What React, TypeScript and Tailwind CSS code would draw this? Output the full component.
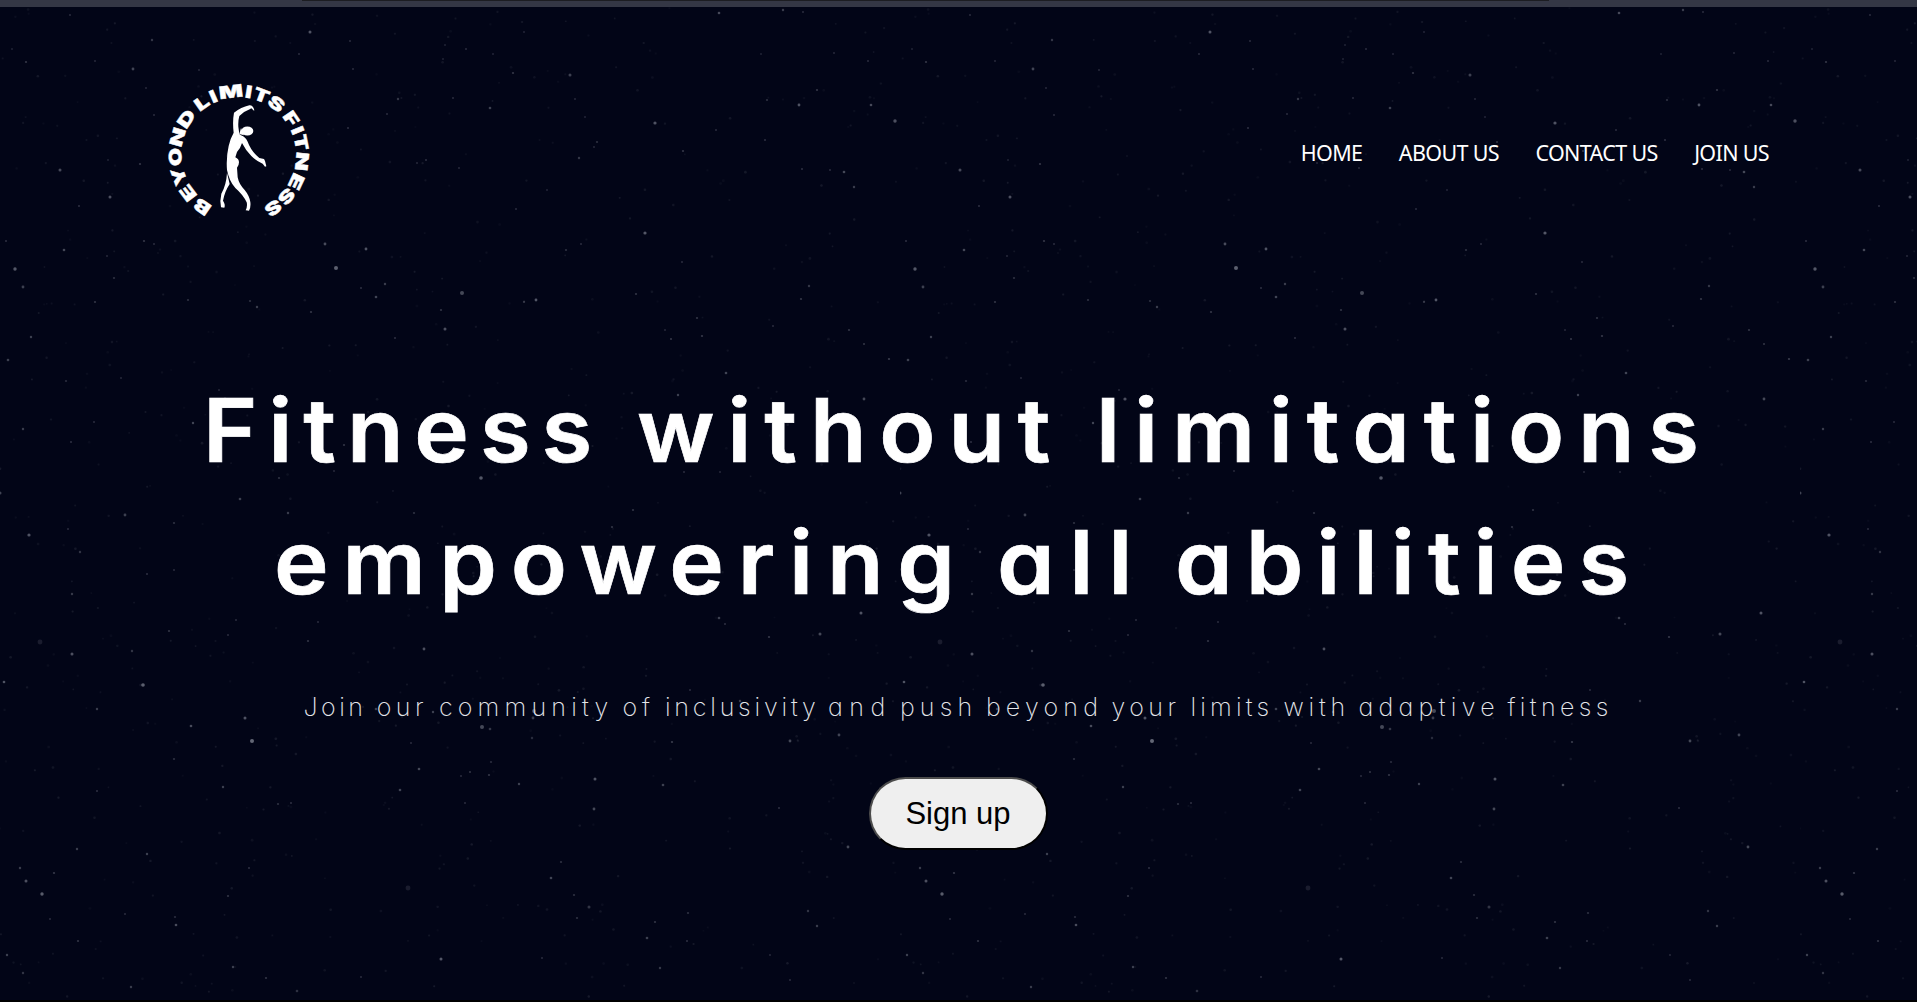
// Star list for one 900px wide tile: x, y, radius, opacity.
const STARS: [number, number, number, number][] = [
  [70, 15, 1, 0.2], [310, 32, 1.5, 0.4], [152, 40, 1.2, 0.25], [350, 41, 1, 0.2], [12, 49, 1, 0.15], [26, 62, 1.1, 0.25],
  [95, 61, 1, 0.18], [133, 69, 1.4, 0.32], [199, 70, 1, 0.18], [299, 54, 1, 0.2], [353, 69, 1, 0.2], [719, 13, 1.3, 0.35],
  [783, 10, 1.2, 0.28], [803, 12, 1, 0.2], [445, 45, 1, 0.15], [466, 49, 1, 0.2], [443, 59, 1, 0.15], [493, 54, 1, 0.16],
  [524, 32, 1, 0.16], [513, 73, 1.1, 0.25], [570, 75, 1.5, 0.3], [761, 54, 1, 0.15], [834, 53, 1, 0.18], [868, 61, 1, 0.2],
  [398, 99, 1.2, 0.25], [453, 98, 1, 0.2], [490, 108, 1.3, 0.3], [387, 114, 1, 0.2], [575, 99, 1, 0.18], [585, 117, 1, 0.16],
  [655, 123, 1.6, 0.4], [799, 105, 1.4, 0.4], [871, 105, 1.3, 0.35], [895, 121, 1.7, 0.38], [767, 100, 1.1, 0.22], [817, 90, 1.1, 0.25],
  [154, 115, 1, 0.2], [146, 88, 1, 0.18], [60, 170, 1.5, 0.35], [140, 164, 1.1, 0.25], [110, 197, 1.5, 0.38], [108, 160, 1, 0.15],
  [79, 206, 1, 0.22], [348, 128, 1, 0.22], [426, 160, 1, 0.22], [417, 163, 1, 0.18], [459, 168, 1, 0.18], [579, 158, 1.2, 0.25],
  [597, 142, 1.1, 0.22], [594, 147, 1, 0.18], [683, 151, 1.1, 0.25], [716, 130, 1, 0.2], [765, 140, 1, 0.22], [844, 172, 1.3, 0.34],
  [854, 187, 1.2, 0.28], [802, 169, 1, 0.22], [830, 170, 1, 0.2], [547, 190, 1, 0.16], [516, 209, 1, 0.2], [645, 233, 1.6, 0.42],
  [325, 244, 1.4, 0.36], [366, 249, 1.4, 0.4], [336, 268, 2, 0.46], [144, 241, 1.1, 0.25], [154, 244, 1, 0.2], [64, 250, 1.3, 0.34],
  [6, 241, 1, 0.22], [15, 269, 1.7, 0.42], [23, 287, 1.4, 0.3], [107, 256, 1, 0.18], [114, 278, 1.1, 0.22], [385, 284, 1.2, 0.28],
  [361, 288, 1, 0.22], [376, 297, 1.3, 0.32], [462, 293, 2, 0.34], [536, 300, 1.4, 0.42], [524, 302, 1.1, 0.25], [95, 302, 1.1, 0.24],
  [188, 300, 1.1, 0.22], [250, 301, 1.1, 0.22], [257, 307, 1.2, 0.28], [311, 312, 1.1, 0.25], [441, 310, 1.1, 0.24], [445, 329, 1.5, 0.38],
  [31, 337, 1.2, 0.3], [8, 360, 1.3, 0.3], [395, 338, 1, 0.22], [566, 250, 1.1, 0.22], [581, 244, 1, 0.2], [682, 262, 1, 0.2],
  [636, 294, 1.1, 0.24], [697, 318, 1.1, 0.24], [809, 286, 1.2, 0.25], [801, 299, 1.1, 0.25], [849, 330, 1.1, 0.24], [773, 326, 1, 0.2],
  [702, 336, 1.1, 0.26], [671, 339, 1, 0.26], [665, 330, 1, 0.18], [726, 373, 1.3, 0.32], [864, 344, 1, 0.25], [889, 359, 1.1, 0.28],
  [121, 378, 1, 0.18], [66, 381, 1.1, 0.2], [225, 399, 1.6, 0.38], [219, 390, 1, 0.18], [678, 395, 1.2, 0.3], [864, 399, 1.4, 0.34],
  [193, 423, 1.2, 0.32], [94, 422, 1, 0.2], [23, 429, 1.2, 0.28], [71, 442, 1, 0.22], [344, 445, 1.1, 0.24], [481, 478, 1.8, 0.42],
  [279, 478, 1.1, 0.22], [334, 471, 1, 0.18], [240, 499, 1.3, 0.3], [0, 493, 1.5, 0.32], [684, 472, 1, 0.2], [720, 472, 1, 0.18],
  [125, 515, 1.4, 0.3], [174, 523, 1.1, 0.22], [288, 513, 1.2, 0.28], [29, 535, 1.6, 0.4], [68, 529, 1, 0.2], [80, 552, 1.2, 0.24],
  [72, 594, 1.2, 0.26], [174, 570, 1, 0.2], [147, 574, 1, 0.22], [414, 513, 1.1, 0.22], [633, 510, 1.1, 0.24], [612, 527, 1.1, 0.24],
  [169, 631, 1.1, 0.24], [40, 642, 2.4, 0.12], [72, 654, 1.5, 0.38], [132, 651, 1.2, 0.24], [236, 620, 1, 0.2], [228, 635, 1, 0.2],
  [424, 649, 1.4, 0.38], [308, 641, 1.1, 0.24], [318, 622, 1, 0.2], [719, 618, 1.3, 0.3], [820, 634, 1.5, 0.34], [861, 613, 1.5, 0.4],
  [769, 637, 1.1, 0.26], [725, 624, 1, 0.22], [4, 682, 1.3, 0.4], [143, 685, 1.8, 0.46], [97, 709, 1.2, 0.28], [191, 726, 1.3, 0.36],
  [245, 718, 1.5, 0.4], [252, 741, 2, 0.5], [482, 727, 2, 0.34], [490, 729, 1.3, 0.25], [534, 711, 2, 0.34], [533, 718, 1.4, 0.28],
  [376, 709, 1.3, 0.3], [433, 712, 1.2, 0.3], [740, 701, 1.2, 0.28], [690, 690, 1, 0.2], [839, 735, 1.4, 0.32], [790, 741, 1.4, 0.34],
  [672, 742, 1.1, 0.28], [532, 738, 1.2, 0.2], [411, 743, 1, 0.2], [174, 759, 1.1, 0.22], [491, 762, 1.1, 0.2], [419, 769, 1.3, 0.34],
  [489, 775, 1.1, 0.25], [470, 772, 1, 0.25], [461, 776, 1, 0.2], [519, 784, 1.2, 0.3], [400, 790, 1.3, 0.32], [595, 779, 1.5, 0.4],
  [663, 785, 1.3, 0.3], [223, 787, 1.2, 0.3], [97, 791, 1, 0.22], [278, 804, 1.1, 0.22], [291, 803, 1, 0.22], [594, 809, 1.4, 0.34],
  [465, 803, 1, 0.2], [779, 808, 1, 0.22], [848, 847, 1.4, 0.34], [77, 849, 1.2, 0.28], [147, 854, 1.2, 0.3], [20, 868, 1.2, 0.28],
  [54, 873, 1.1, 0.26], [26, 881, 1.5, 0.38], [42, 894, 1.7, 0.44], [249, 868, 1, 0.22], [561, 862, 1.1, 0.22], [551, 878, 1.3, 0.32],
  [408, 888, 2.4, 0.12], [228, 896, 1.1, 0.24], [574, 895, 1.1, 0.22], [589, 907, 1.5, 0.24], [175, 917, 1.1, 0.2], [176, 925, 1.3, 0.36],
  [50, 919, 1, 0.2], [125, 914, 1, 0.2], [577, 918, 1.1, 0.22], [688, 913, 1.1, 0.22], [655, 922, 1.1, 0.24], [647, 938, 1.3, 0.3],
  [808, 911, 1.2, 0.24], [817, 926, 1.2, 0.28], [78, 941, 1.1, 0.24], [7, 955, 1.2, 0.3], [441, 959, 1.5, 0.42], [233, 967, 1.2, 0.3],
  [23, 973, 1.2, 0.24], [131, 987, 1.2, 0.28], [266, 978, 1.1, 0.24], [361, 977, 1, 0.2], [660, 968, 1.2, 0.26], [297, 991, 1.3, 0.22],
  [542, 958, 1, 0.2], [687, 941, 1, 0.22], [770, 955, 1, 0.18], [790, 980, 1, 0.2],
];

// Deterministic dust of very faint specks between the brighter stars.
function makeDust(count: number): [number, number, number, number][] {
  let seed = 7331;
  const next = () => {
    seed = (seed * 16807) % 2147483647;
    return seed / 2147483647;
  };
  return Array.from({ length: count }, () => [next() * 900, next() * 1000, 0.8 + next() * 0.5, 0.03 + next() * 0.07]);
}
const SKY = [...STARS, ...makeDust(600)];

function Starfield() {
  return (
    <svg className="absolute inset-0 h-full w-full" aria-hidden="true">
      <defs>
        <pattern id="sky" width="900" height="1002" patternUnits="userSpaceOnUse">
          {SKY.map(([x, y, r, o], i) => (
            <circle key={i} cx={x} cy={y} r={r} fill="#dfe3ee" opacity={o * 0.88} />
          ))}
        </pattern>
      </defs>
      <rect width="100%" height="100%" fill="url(#sky)" />
    </svg>
  );
}

// Ring letters: character, angle in degrees clockwise from the top, horizontal stretch.
const RING: [string, number, number][] = [
  ["B", -145, 1.4], ["E", -127, 1.5], ["Y", -110, 1.35], ["O", -92, 1.35], ["N", -74, 1.4], ["D", -55.5, 1.45],
  ["L", -35.5, 1.4], ["I", -23.5, 1.3], ["M", -7, 1.45], ["I", 9, 1.3], ["T", 21, 1.35], ["S", 36.5, 1.4],
  ["F", 55.5, 1.4], ["I", 67.5, 1.3], ["T", 79, 1.35], ["N", 96, 1.4], ["E", 115, 1.5], ["S", 131, 1.4], ["S", 147, 1.4],
];

function Logo() {
  return (
    <svg viewBox="0 0 540 480" className="h-[160px] w-[180px]" fill="#fff" role="img" aria-label="Beyond Limits Fitness">
      {RING.map(([ch, a, sx], i) => (
        <text
          key={i}
          transform={`translate(266 254) rotate(${a}) translate(0 -172) scale(${sx} 1)`}
          textAnchor="middle"
          fontFamily="Inter, sans-serif"
          fontWeight="900"
          fontSize="52"
          stroke="#fff"
          strokeWidth="1.2"
        >
          {ch}
        </text>
      ))}
      <path d="M312 122 L304 115 L299 118 Q280 125 268 138 Q264 152 265 170 L268 192 L273 196 Q287 201 293 215 Q303 243 328 264 L342 267 L345 273 L349 289 L345 290 L338 281 Q318 272 304 258 Q287 241 276 219 Q271 236 261 246 L256 262 Q267 267 267 277 Q267 286 261 293 L263 322 Q267 343 284 360 Q298 377 301 396 Q303 412 297 422 L287 421 Q293 409 290 397 Q279 374 256 354 Q238 335 231 300 Q228 262 236 228 Q241 205 251 188 Q247 155 252 128 Q273 112 298 106 Q309 105 313 121 Z" />
      <ellipse cx="292" cy="183" rx="18" ry="13.5" />
      <path d="M273 174 L268 192 L282 196 Z" />
      <path d="M231 308 Q229 345 214 371 Q209 391 213 412 L223 413 Q227 404 219 392 Q224 365 239 342 Z" />
    </svg>
  );
}

const NAV = ["HOME", "ABOUT US", "CONTACT US", "JOIN US"];

// Tagline words with their column width and tracking.
const TAGLINE: [string, string][] = [
  ["Join", "w-[73.2px] tracking-[3.5px]"],
  ["our", "w-[62.2px] tracking-[4.5px]"],
  ["community", "w-[183.5px] tracking-[5.2px]"],
  ["of", "w-[42.5px] tracking-[5px]"],
  ["inclusivity", "w-[163px] tracking-[3.8px]"],
  ["and", "w-[72px] tracking-[6.6px]"],
  ["push", "w-[86px] tracking-[5.2px]"],
  ["beyond", "w-[125.5px] tracking-[5.2px]"],
  ["your", "w-[79px] tracking-[4.5px]"],
  ["limits", "w-[93px] tracking-[4.2px]"],
  ["with", "w-[75px] tracking-[4.8px]"],
  ["adaptive", "w-[149px] tracking-[5.3px]"],
  ["fitness", "tracking-[4.4px]"],
];

export default function App() {
  return (
    <div className="relative flex h-[1002px] w-full flex-col overflow-hidden bg-[#020517] text-white">
      <Starfield />
      <div className="relative h-[7px] shrink-0 bg-[#343745]">
        <div className="ml-[302px] h-px w-[1247px] bg-[#1c1d22]" />
      </div>

      <header className="relative flex items-center justify-between pt-[63px] pr-[148px] pl-[150px]">
        <Logo />
        <nav className="mt-[6px] flex gap-[36.5px] font-['Noto_Sans',sans-serif] text-[21.5px] leading-7 tracking-[-0.65px]">
          {NAV.map((n) => (
            <a key={n} href="#" className="whitespace-nowrap">
              {n}
            </a>
          ))}
        </nav>
      </header>

      <main className="relative flex flex-col items-center font-['Inter',sans-serif] [font-feature-settings:'cv11']">
        <h1 className="mt-[134px] w-full whitespace-nowrap text-[88px] leading-[132px] font-semibold [-webkit-text-stroke:0.7px_white]">
          <span className="flex pl-[203px]">
            <span className="w-[434px] origin-left scale-x-105 tracking-[10.4px]">Fitness </span>
            <span className="w-[458.5px] origin-left scale-x-105 tracking-[12.2px]">without </span>
            <span className="origin-left scale-x-105 tracking-[13.1px]">limitations </span>
          </span>
          <span className="flex pl-[273.5px]">
            <span className="w-[723.5px] origin-left scale-x-105 tracking-[13.1px]">empowering </span>
            <span className="w-[178px] origin-left scale-x-105 tracking-[14px]">all </span>
            <span className="origin-left scale-x-105 tracking-[12.4px]">abilities</span>
          </span>
        </h1>
        <p className="mt-[60px] flex w-full pl-[303.5px] text-[25px] leading-[38px] font-extralight whitespace-nowrap text-[#e4e6ea]">
          {TAGLINE.map(([word, cls]) => (
            <span key={word} className={cls}>
              {word}{" "}
            </span>
          ))}
        </p>
        <button className="mt-[51px] mr-px h-[73px] w-[179px] rounded-[36.5px] border-2 border-t-[#4c4c4c] border-r-black border-b-black border-l-[#4c4c4c] bg-[#efefef] font-['Liberation_Sans',sans-serif] text-[31px] leading-none text-black">
          Sign up
        </button>
      </main>

      <div className="absolute bottom-0 h-[2px] w-full bg-black" />
    </div>
  );
}
